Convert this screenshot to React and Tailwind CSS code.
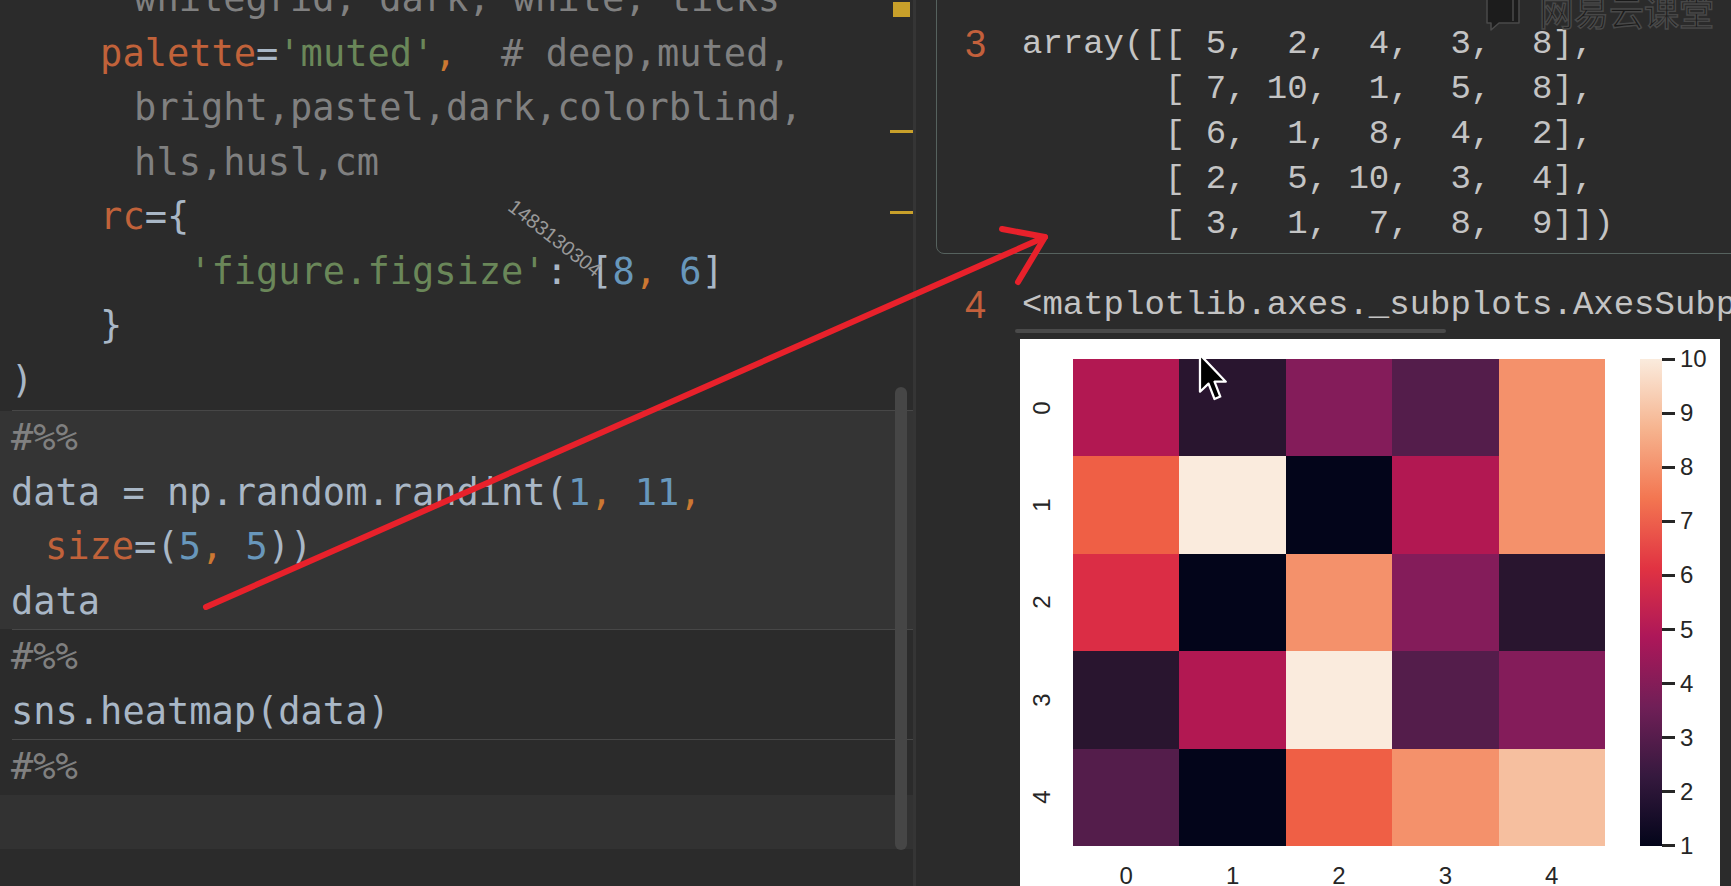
import React from "react";

// token colours (Darcula-ish)
const tone = {
  d: "text-[#a9b7c6]",
  p: "text-[#c1623a]",
  s: "text-[#6a8759]",
  n: "text-[#6897bb]",
  o: "text-[#cc7832]",
  c: "text-[#808080]",
};

const cellOne = [
  { wrap: true, t: [["c", "    whitegrid, dark, white, ticks"]] },
  { t: [["p", "    palette"], ["d", "="], ["s", "'muted'"], ["o", ","], ["c", "  # deep,muted,"]] },
  { wrap: true, t: [["c", "    bright,pastel,dark,colorblind,"]] },
  { wrap: true, t: [["c", "    hls,husl,cm"]] },
  { t: [["p", "    rc"], ["d", "={"]] },
  { t: [["s", "        'figure.figsize'"], ["d", ": ["], ["n", "8"], ["o", ","], ["n", " 6"], ["d", "]"]] },
  { t: [["d", "    }"]] },
  { t: [["d", ")"]] },
];

const cellTwo = [
  { t: [["c", "#%%"]] },
  { t: [["d", "data = np.random.randint("], ["n", "1"], ["o", ","], ["n", " 11"], ["o", ","]] },
  { wrap: true, t: [["p", "size"], ["d", "=("], ["n", "5"], ["o", ","], ["n", " 5"], ["d", "))"]] },
  { t: [["d", "data"]] },
];

const cellThree = [
  { t: [["c", "#%%"]] },
  { t: [["d", "sns.heatmap(data)"]] },
];

const arrayRows = [
  "array([[ 5,  2,  4,  3,  8],",
  "       [ 7, 10,  1,  5,  8],",
  "       [ 6,  1,  8,  4,  2],",
  "       [ 2,  5, 10,  3,  4],",
  "       [ 3,  1,  7,  8,  9]])",
];

const data = [
  [5, 2, 4, 3, 8],
  [7, 10, 1, 5, 8],
  [6, 1, 8, 4, 2],
  [2, 5, 10, 3, 4],
  [3, 1, 7, 8, 9],
];

// rocket colormap, vmin 1 .. vmax 10
const rocket = {
  1: "bg-[#03051a]",
  2: "bg-[#29152f]",
  3: "bg-[#541d4b]",
  4: "bg-[#841c5a]",
  5: "bg-[#b21852]",
  6: "bg-[#db2d45]",
  7: "bg-[#ef5f45]",
  8: "bg-[#f4916b]",
  9: "bg-[#f6bf9f]",
  10: "bg-[#faebdd]",
};

function CodeLine({ line }) {
  return (
    <div className={line.wrap ? "whitespace-pre pl-[34px]" : "whitespace-pre"}>
      {line.t.map(([k, txt], i) => (
        <span key={i} className={tone[k]}>{txt}</span>
      ))}
    </div>
  );
}

function Divider() {
  return <div className="ml-[12px] h-px bg-[#474747]" />;
}

function Editor() {
  return (
    <div className="relative flex w-[913px] shrink-0 flex-col font-['DejaVu_Sans_Mono',monospace] text-[37px] leading-[54.5px]">
      <div className="-mt-[28px] pb-[2px] pl-[11px]">
        {cellOne.map((l, i) => <CodeLine key={i} line={l} />)}
      </div>
      <Divider />
      <div className="bg-[#343434] pl-[11px]">
        {cellTwo.map((l, i) => <CodeLine key={i} line={l} />)}
      </div>
      <Divider />
      <div className="pl-[11px]">
        {cellThree.map((l, i) => <CodeLine key={i} line={l} />)}
      </div>
      <Divider />
      <div className="pl-[11px]">
        <CodeLine line={{ t: [["c", "#%%"]] }} />
      </div>
      <div className="h-[54.5px] bg-[#323232]" />

      {/* scrollbar + change markers */}
      <div className="absolute left-[895px] top-[387px] h-[463px] w-[12px] rounded-full bg-[#464646]" />
      <div className="absolute left-[893px] top-[2px] h-[15px] w-[17px] bg-[#c8a02a]" />
      <div className="absolute left-[890px] top-[130px] h-[3px] w-[23px] bg-[#c8a02a]" />
      <div className="absolute left-[890px] top-[211px] h-[3px] w-[23px] bg-[#c8a02a]" />
    </div>
  );
}

function Cursor() {
  return (
    <svg className="absolute left-[178px] top-[14px]" width="33" height="50" viewBox="0 0 20 31">
      <path
        d="M1 1 L1 24 L6.3 19 L10 28.5 L13.6 27 L10 17.8 L17 17.8 Z"
        fill="#000"
        stroke="#fff"
        strokeWidth="1.4"
        strokeLinejoin="round"
      />
    </svg>
  );
}

function Figure() {
  const ticks = [10, 9, 8, 7, 6, 5, 4, 3, 2, 1];
  return (
    <div className="relative ml-[104px] mt-[6px] h-[560px] w-[700px] shrink-0 bg-white pt-[20px] font-['Liberation_Sans',Arial,sans-serif] text-[24px] text-[#262626]">
      <div className="flex">
        <div className="flex w-[53px] flex-col">
          {[0, 1, 2, 3, 4].map((r) => (
            <div key={r} className="flex h-[97.4px] w-[44px] items-center justify-center">
              <span className="-rotate-90 leading-none">{r}</span>
            </div>
          ))}
        </div>
        <div className="w-[532px]">
          <div className="grid h-[487px] grid-cols-5 grid-rows-5">
            {data.flat().map((v, i) => (
              <div key={i} className={rocket[v]} />
            ))}
          </div>
          <div className="mt-[18px] grid grid-cols-5 leading-[24px]">
            {[0, 1, 2, 3, 4].map((c) => (
              <div key={c} className="text-center">{c}</div>
            ))}
          </div>
        </div>
        <div className="ml-[35px] h-[487px] w-[22px] bg-[linear-gradient(to_top,#03051a_0%,#35193e_14.3%,#701f57_28.6%,#ad1759_42.9%,#e13342_57.1%,#f37651_71.4%,#f6b48f_85.7%,#faebdd_100%)]" />
        <div className="flex h-[487px] flex-col justify-between text-[24px]">
          {ticks.map((t) => (
            <div key={t} className="flex h-0 items-center">
              <div className="h-[3px] w-[13px] bg-[#262626]" />
              <span className="ml-[5px] leading-none">{t}</span>
            </div>
          ))}
        </div>
      </div>
      <Cursor />
    </div>
  );
}

function Output() {
  return (
    <div className="flex min-w-0 flex-1 flex-col overflow-hidden">
      <div className="-mt-[20px] ml-[20px] w-[1000px] shrink-0 rounded-b-[8px] border border-[#56625e] pb-[6px] pt-[41px]">
        <div className="flex">
          <div className="w-[85px] shrink-0 pl-[28px] font-['Liberation_Sans',Arial,sans-serif] text-[38px] leading-[45px] text-[#c3603c]">3</div>
          <div className="font-['Liberation_Mono',monospace] text-[34px] leading-[45px] text-[#c4c4c4]">
            {arrayRows.map((r, i) => (
              <div key={i} className="whitespace-pre">{r}</div>
            ))}
          </div>
        </div>
      </div>
      <div className="ml-[21px] mt-[29px] flex shrink-0">
        <div className="w-[85px] shrink-0 pl-[28px] font-['Liberation_Sans',Arial,sans-serif] text-[38px] leading-[45px] text-[#c3603c]">4</div>
        <div className="whitespace-pre font-['Liberation_Mono',monospace] text-[34px] leading-[45px] text-[#c4c4c4]">
          {"<matplotlib.axes._subplots.AxesSubplot at 0x1a1e2b5f98>"}
        </div>
      </div>
      <div className="ml-[99px] mt-[1px] h-[4px] w-[431px] shrink-0 rounded-full bg-[#4a4a4a]" />
      <Figure />
    </div>
  );
}

function Logo() {
  return (
    <div className="absolute left-[1483px] top-[-7px] flex items-start gap-[14px]">
      <svg width="42" height="38" viewBox="0 0 42 38">
        <path d="M4 0 H36 V30 H16 L8 37 V30 H4 Z" fill="#1c1c1c" stroke="#4a4a4a" strokeWidth="1.5" strokeLinejoin="round" />
        <path d="M30 2 V28" stroke="#4a4a4a" strokeWidth="1.5" />
      </svg>
      <span className="font-['Noto_Sans_CJK_SC',sans-serif] text-[35px] leading-none text-[#1a1a1a] [-webkit-text-stroke:1.5px_#484848]">
        网易云课堂
      </span>
    </div>
  );
}

export default function App() {
  return (
    <div className="relative flex h-[886px] w-[1731px] overflow-hidden bg-[#2b2b2b]">
      <Editor />
      <div className="w-[3px] shrink-0 bg-[#353535]" />
      <Output />

      {/* overlays */}
      <Logo />
      <div className="absolute left-[555px] top-[238px] -translate-x-1/2 -translate-y-1/2 rotate-[38deg] font-['Liberation_Sans',Arial,sans-serif] text-[20px] leading-none text-[#9a9a9a]">
        1483130304
      </div>
      <svg className="pointer-events-none absolute inset-0" width="1731" height="886">
        <g stroke="#e8212b" strokeWidth="6" strokeLinecap="round" strokeLinejoin="round" fill="none">
          <path d="M206 607 L1045 237" />
          <path d="M1002 229 L1045 237 L1018 282" />
        </g>
      </svg>
    </div>
  );
}
